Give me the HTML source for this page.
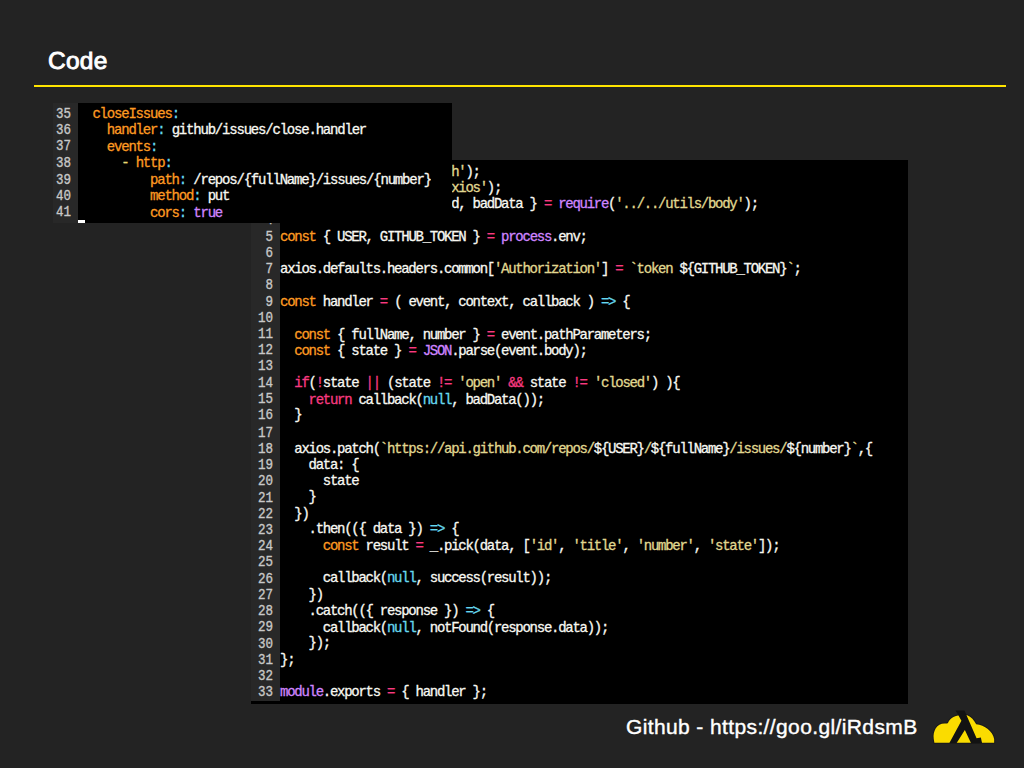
<!DOCTYPE html>
<html><head><meta charset="utf-8">
<style>
html,body{margin:0;padding:0;}
body{width:1024px;height:768px;background:#232323;position:relative;overflow:hidden;font-family:"Liberation Sans",sans-serif;}
.title{position:absolute;left:48px;top:45.5px;font-size:24.5px;letter-spacing:0.25px;color:#fff;line-height:30px;white-space:nowrap;-webkit-text-stroke:0.9px #fff;}
.rule{position:absolute;left:34px;top:85px;width:972px;height:2px;background:#ffe500;}
.blk{position:absolute;background:#000;overflow:hidden;}
.gut{position:absolute;left:0;top:0;background:#282828;}
.txt{position:absolute;font-family:"Liberation Mono",monospace;white-space:pre;color:#f8f8f2;transform-origin:0 0;}
#b2 .txt div{line-height:16.574px;height:16.574px}
#b1 .txt div{line-height:16.798px;height:16.798px}
.txt{-webkit-text-stroke:0.3px}
.gn{text-align:right;color:#c8c8c8;}
i{font-style:normal;}
.k{color:#fd9a22}.p{color:#f83a80}.u{color:#cf85ff}.s{color:#e0d890}.c{color:#66d9ef}.y{color:#e6db74}
#b2{left:251px;top:160px;width:657px;height:544px;}
#b2 .gut{width:29px;height:541px;}
#b1{left:53px;top:103px;width:399px;height:120px;}
#b1 .gut{width:25px;height:120px;}
.foot{position:absolute;left:626px;top:715px;font-size:21px;letter-spacing:0.38px;color:#fff;line-height:24px;white-space:nowrap;-webkit-text-stroke:0.4px #fff;}
</style></head><body>
<div class="title">Code</div>
<div class="rule"></div>
<div class="blk" id="b2">
 <div class="gut"></div>
 <div class="txt gn" style="font-size:12.50px;letter-spacing:0;transform:scaleY(1.1599);top:3.80px;left:0;width:22px"><div style="height:14.035px;line-height:14.035px">1</div><div style="height:14.035px;line-height:14.035px">2</div><div style="height:14.035px;line-height:14.035px">3</div><div style="height:14.035px;line-height:14.035px">4</div><div style="height:14.035px;line-height:14.035px">5</div><div style="height:14.035px;line-height:14.035px">6</div><div style="height:14.035px;line-height:14.035px">7</div><div style="height:14.035px;line-height:14.035px">8</div><div style="height:14.035px;line-height:14.035px">9</div><div style="height:14.035px;line-height:14.035px">10</div><div style="height:14.035px;line-height:14.035px">11</div><div style="height:14.035px;line-height:14.035px">12</div><div style="height:14.035px;line-height:14.035px">13</div><div style="height:14.035px;line-height:14.035px">14</div><div style="height:14.035px;line-height:14.035px">15</div><div style="height:14.035px;line-height:14.035px">16</div><div style="height:14.035px;line-height:14.035px">17</div><div style="height:14.035px;line-height:14.035px">18</div><div style="height:14.035px;line-height:14.035px">19</div><div style="height:14.035px;line-height:14.035px">20</div><div style="height:14.035px;line-height:14.035px">21</div><div style="height:14.035px;line-height:14.035px">22</div><div style="height:14.035px;line-height:14.035px">23</div><div style="height:14.035px;line-height:14.035px">24</div><div style="height:14.035px;line-height:14.035px">25</div><div style="height:14.035px;line-height:14.035px">26</div><div style="height:14.035px;line-height:14.035px">27</div><div style="height:14.035px;line-height:14.035px">28</div><div style="height:14.035px;line-height:14.035px">29</div><div style="height:14.035px;line-height:14.035px">30</div><div style="height:14.035px;line-height:14.035px">31</div><div style="height:14.035px;line-height:14.035px">32</div><div style="height:14.035px;line-height:14.035px">33</div></div>
 <div class="txt" style="font-size:14.00px;letter-spacing:-1.270px;transform:scaleY(0.9823);top:4.40px;left:29.0px"><div><i class="k">const</i> _ <i class="p">=</i> <i class="u">require</i>(<i class="s">'lodash'</i>);</div><div><i class="k">const</i> axios <i class="p">=</i> <i class="u">require</i>(<i class="s">'axios'</i>);</div><div><i class="k">const</i> { success, notFound, badData } <i class="p">=</i> <i class="u">require</i>(<i class="s">'../../utils/body'</i>);</div><div> </div><div><i class="k">const</i> { USER, GITHUB_TOKEN } <i class="p">=</i> <i class="u">process</i>.env;</div><div> </div><div>axios.defaults.headers.common[<i class="s">'Authorization'</i>] <i class="p">=</i> <i class="s">`token </i>${GITHUB_TOKEN}<i class="s">`</i>;</div><div> </div><div><i class="k">const</i> handler <i class="p">=</i> ( event, context, callback ) <i class="c">=&gt;</i> {</div><div> </div><div>  <i class="k">const</i> { fullName, number } <i class="p">=</i> event.pathParameters;</div><div>  <i class="k">const</i> { state } <i class="p">=</i> <i class="u">JSON</i>.parse(event.body);</div><div> </div><div>  <i class="p">if</i>(<i class="p">!</i>state <i class="p">||</i> (state <i class="p">!=</i> <i class="s">'open'</i> <i class="p">&amp;&amp;</i> state <i class="p">!=</i> <i class="s">'closed'</i>) ){</div><div>    <i class="p">return</i> callback(<i class="c">null</i>, badData());</div><div>  }</div><div> </div><div>  axios.patch(<i class="s">`https://api.github.com/repos/</i>${USER}<i class="s">/</i>${fullName}<i class="s">/issues/</i>${number}<i class="s">`</i>,{</div><div>    data: {</div><div>      state</div><div>    }</div><div>  })</div><div>    .then(({ data }) <i class="c">=&gt;</i> {</div><div>      <i class="k">const</i> result <i class="p">=</i> _.pick(data, [<i class="s">'id'</i>, <i class="s">'title'</i>, <i class="s">'number'</i>, <i class="s">'state'</i>]);</div><div> </div><div>      callback(<i class="c">null</i>, success(result));</div><div>    })</div><div>    .catch(({ response }) <i class="c">=&gt;</i> {</div><div>      callback(<i class="c">null</i>, notFound(response.data));</div><div>    });</div><div>};</div><div> </div><div><i class="u">module</i>.exports <i class="p">=</i> { handler };</div></div>
</div>
<div class="blk" id="b1">
 <div class="gut"></div>
 <div class="txt gn" style="font-size:12.50px;letter-spacing:0;transform:scaleY(1.1599);top:2.50px;left:0;width:18px"><div style="height:14.225px;line-height:14.225px">35</div><div style="height:14.225px;line-height:14.225px">36</div><div style="height:14.225px;line-height:14.225px">37</div><div style="height:14.225px;line-height:14.225px">38</div><div style="height:14.225px;line-height:14.225px">39</div><div style="height:14.225px;line-height:14.225px">40</div><div style="height:14.225px;line-height:14.225px">41</div><div style="height:14.225px;line-height:14.225px">42</div></div>
 <div class="txt" style="font-size:14.00px;letter-spacing:-1.200px;transform:scaleY(0.9823);top:3.00px;left:25px"><div>  <i class="k">closeIssues</i><i class="c">:</i></div><div>    <i class="k">handler</i><i class="c">:</i> github/issues/close.handler</div><div>    <i class="k">events</i><i class="c">:</i></div><div>      <i class="y">-</i> <i class="k">http</i><i class="c">:</i></div><div>          <i class="k">path</i><i class="c">:</i> /repos/{fullName}/issues/{number}</div><div>          <i class="k">method</i><i class="c">:</i> put</div><div>          <i class="k">cors</i><i class="c">:</i> <i class="u">true</i></div><div> </div></div>
 <div style="position:absolute;left:25px;top:117px;width:7px;height:3px;background:#fff"></div>
</div>
<div class="foot">Github - https://goo.gl/iRdsmB</div>
<svg style="position:absolute;left:925px;top:700px" width="80" height="50" viewBox="0 0 1024 640">
<path fill="#fadc00" stroke="#1a1a1a" stroke-width="26" paint-order="stroke" stroke-linejoin="round" d="M120 548 L112 500 C98 400 150 300 255 302 C275 303 288 298 295 290 C330 220 390 195 460 195 L540 195 C590 215 630 260 655 310 C760 320 870 400 885 500 L885 548 Z"/>
<path fill="#121212" d="M390 135 L505 135 L660 490 L715 480 L730 550 L590 552 L510 385 L405 550 L312 550 L466 265 L418 180 Z"/>
</svg>
</body></html>
